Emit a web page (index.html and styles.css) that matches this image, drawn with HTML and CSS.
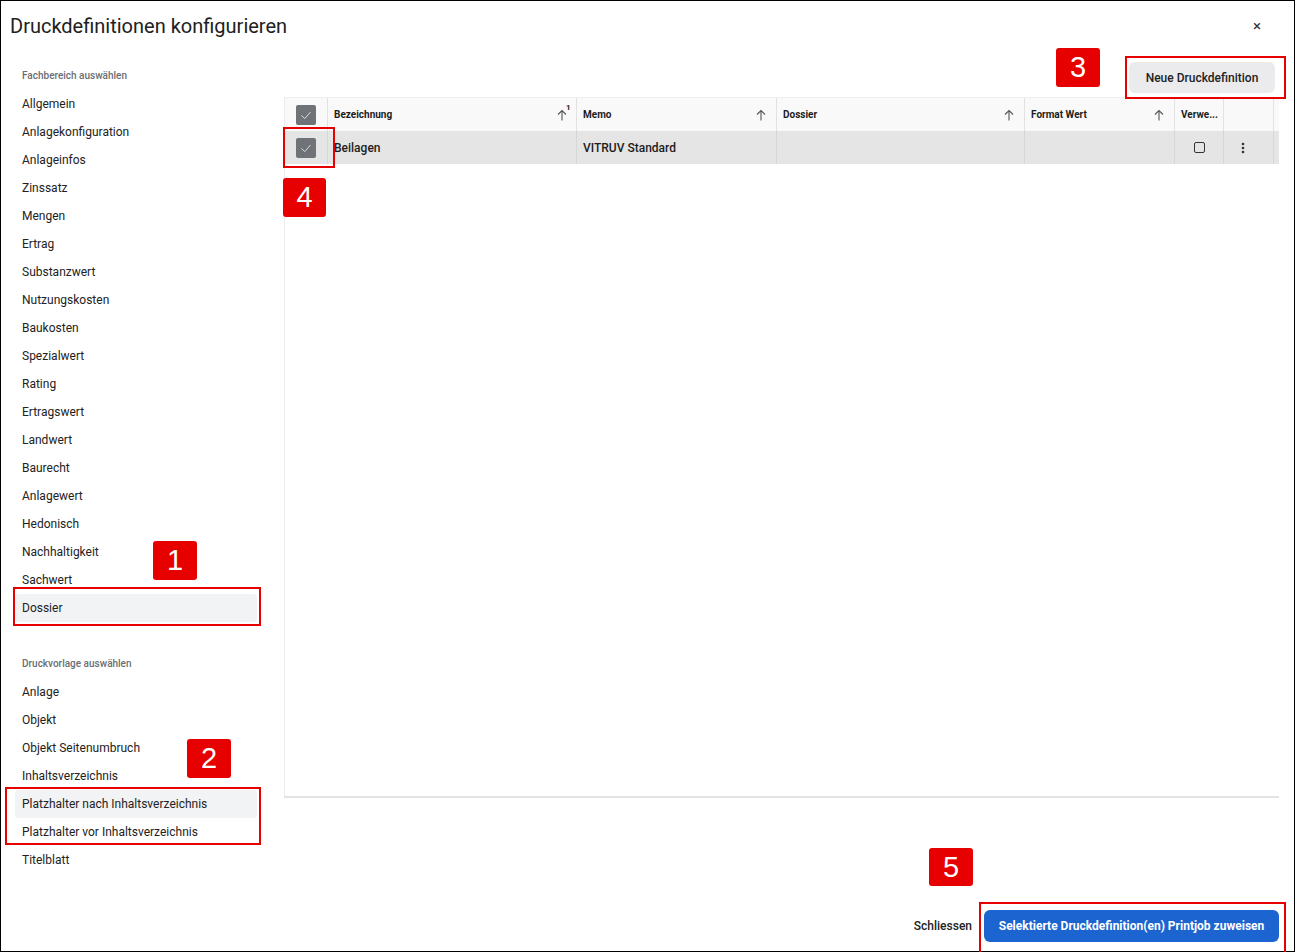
FILE: index.html
```html
<!DOCTYPE html>
<html lang="de">
<head>
  <meta charset="UTF-8" />
  <title>Druckdefinitionen konfigurieren</title>
  <link rel="stylesheet" href="styles.css">
</head>
<body>
  <div class="dialog">
    <div class="dialog-header">
      <h1 class="title">Druckdefinitionen konfigurieren</h1>
      <span class="close">&#215;</span>
    </div>

    <div class="dialog-main">
      <div class="sidebar">
        <div class="section-label">Fachbereich auswählen</div>
        <div class="nav-item">Allgemein</div>
        <div class="nav-item">Anlagekonfiguration</div>
        <div class="nav-item">Anlageinfos</div>
        <div class="nav-item">Zinssatz</div>
        <div class="nav-item">Mengen</div>
        <div class="nav-item">Ertrag</div>
        <div class="nav-item">Substanzwert</div>
        <div class="nav-item">Nutzungskosten</div>
        <div class="nav-item">Baukosten</div>
        <div class="nav-item">Spezialwert</div>
        <div class="nav-item">Rating</div>
        <div class="nav-item">Ertragswert</div>
        <div class="nav-item">Landwert</div>
        <div class="nav-item">Baurecht</div>
        <div class="nav-item">Anlagewert</div>
        <div class="nav-item">Hedonisch</div>
        <div class="nav-item">Nachhaltigkeit</div>
        <div class="nav-item">Sachwert</div>
        <div class="nav-item active">Dossier</div>

        <div class="section-label second">Druckvorlage auswählen</div>
        <div class="nav-item">Anlage</div>
        <div class="nav-item">Objekt</div>
        <div class="nav-item">Objekt Seitenumbruch</div>
        <div class="nav-item">Inhaltsverzeichnis</div>
        <div class="nav-item active">Platzhalter nach Inhaltsverzeichnis</div>
        <div class="nav-item">Platzhalter vor Inhaltsverzeichnis</div>
        <div class="nav-item">Titelblatt</div>
      </div>

      <div class="content">
        <div class="toolbar">
          <button class="btn-secondary">Neue Druckdefinition</button>
        </div>

        <div class="table-panel">
          <div class="row head">
            <div class="cell check">
              <svg width="20" height="20" viewBox="0 0 20 20"><rect width="20" height="20" rx="2" fill="#6f7277"/><polyline points="5.5,10.5 8.8,13.6 14.5,7" fill="none" stroke="#d9dadc" stroke-width="1"/></svg>
            </div>
            <div class="cell">Bezeichnung
              <span class="sort first">
                <svg width="10" height="12" viewBox="0 0 10 12"><path d="M5 11.5V1.5M1 5.5L5 1.5L9 5.5" fill="none" stroke="#555" stroke-width="1.1"/></svg><sup>1</sup>
              </span>
            </div>
            <div class="cell">Memo
              <span class="sort"><svg width="10" height="12" viewBox="0 0 10 12"><path d="M5 11.5V1.5M1 5.5L5 1.5L9 5.5" fill="none" stroke="#555" stroke-width="1.1"/></svg></span>
            </div>
            <div class="cell">Dossier
              <span class="sort"><svg width="10" height="12" viewBox="0 0 10 12"><path d="M5 11.5V1.5M1 5.5L5 1.5L9 5.5" fill="none" stroke="#555" stroke-width="1.1"/></svg></span>
            </div>
            <div class="cell">Format Wert
              <span class="sort"><svg width="10" height="12" viewBox="0 0 10 12"><path d="M5 11.5V1.5M1 5.5L5 1.5L9 5.5" fill="none" stroke="#555" stroke-width="1.1"/></svg></span>
            </div>
            <div class="cell">Verwe...</div>
            <div class="cell"></div>
            <div class="cell last"></div>
          </div>

          <div class="row data">
            <div class="cell check">
              <svg width="20" height="20" viewBox="0 0 20 20"><rect width="20" height="20" rx="2" fill="#6f7277"/><polyline points="5.5,10.5 8.8,13.6 14.5,7" fill="none" stroke="#d9dadc" stroke-width="1"/></svg>
            </div>
            <div class="cell">Beilagen</div>
            <div class="cell">VITRUV Standard</div>
            <div class="cell"></div>
            <div class="cell"></div>
            <div class="cell center"><span class="box"></span></div>
            <div class="cell center menu">
              <svg width="4" height="12" viewBox="0 0 4 12"><circle cx="2" cy="2" r="1.3" fill="#333"/><circle cx="2" cy="6" r="1.3" fill="#333"/><circle cx="2" cy="10" r="1.3" fill="#333"/></svg>
            </div>
            <div class="cell last"></div>
          </div>
        </div>
      </div>
    </div>

    <div class="dialog-footer">
      <button class="btn-text">Schliessen</button>
      <button class="btn-primary">Selektierte Druckdefinition(en) Printjob zuweisen</button>
    </div>
  </div>

  <!-- annotation markers -->
  <div class="badge b1">1</div>
  <div class="frame f1"></div>
  <div class="badge b2">2</div>
  <div class="frame f2"></div>
  <div class="badge b3">3</div>
  <div class="frame f3"></div>
  <div class="badge b4">4</div>
  <div class="frame f4"></div>
  <div class="badge b5">5</div>
  <div class="frame f5"></div>
</body>
</html>
```

FILE: styles.css
```css
body {
  margin: 0;
  position: relative;
  font-family: Roboto, "Liberation Sans", sans-serif;
  color: #222;
  background: #fff;
}

.dialog {
  width: 1295px;
  height: 952px;
  box-sizing: border-box;
  border: 1px solid #000;
  display: flex;
  flex-direction: column;
}

.dialog-header {
  height: 50px;
  display: flex;
  align-items: center;
  justify-content: space-between;
  padding: 0 33px 0 9px;
}

.title {
  margin: 0;
  font-size: 20px;
  font-weight: 400;
  color: #212121;
}

.close {
  font-size: 15px;
  color: #333;
}

.dialog-main {
  flex: 1;
  min-height: 0;
  display: flex;
}

.sidebar {
  width: 242px;
  margin-left: 14px;
  padding-top: 11px;
}

.section-label {
  height: 28px;
  line-height: 28px;
  padding-left: 7px;
  font-size: 10px;
  font-weight: 500;
  color: #6b6e73;
}

.section-label.second {
  margin-top: 28px;
}

.nav-item {
  height: 28px;
  line-height: 28px;
  padding-left: 7px;
  font-size: 12px;
  color: #222;
  border-radius: 3px;
}

.nav-item.active {
  background: #f2f3f5;
}

.content {
  width: 995px;
  margin-left: 27px;
}

.toolbar {
  height: 46px;
  box-sizing: border-box;
  padding: 11px 4px 0 0;
  display: flex;
  justify-content: flex-end;
  align-items: flex-start;
}

.btn-secondary {
  height: 31px;
  width: 146px;
  border: none;
  border-radius: 6px;
  background: #ebebed;
  color: #222;
  font-family: inherit;
  font-size: 12px;
  font-weight: 500;
}

.table-panel {
  height: 701px;
  box-sizing: border-box;
  border-left: 1px solid #ececec;
  border-bottom: 2px solid #e3e3e3;
}

.row {
  display: grid;
  grid-template-columns: 43px 249px 200px 248px 150px 49px 50px 1fr;
}

.row.head {
  height: 34px;
  background: #f9f9f9;
  border-top: 1px solid #efefef;
  box-sizing: border-box;
  font-size: 10px;
  font-weight: 700;
  color: #1d1d1d;
}

.row.data {
  height: 33px;
  background: #e5e5e5;
  font-size: 12px;
  font-weight: 500;
  color: #1d1d1d;
}

.cell {
  position: relative;
  display: flex;
  align-items: center;
  padding-left: 6px;
  border-right: 1px solid #e2e2e2;
  white-space: nowrap;
}

.row.data .cell {
  border-right-color: #d7d7d7;
}

.cell.check {
  padding-left: 11px;
}

.cell.center {
  justify-content: center;
  padding-left: 0;
}

.cell.menu {
  padding-right: 11px;
}

.cell.last {
  border-right: none;
}

.sort {
  position: absolute;
  right: 10px;
  top: 11px;
}

.sort.first {
  right: 9px;
}

.sort sup {
  position: absolute;
  left: 9px;
  top: -5px;
  font-size: 8px;
  font-weight: 700;
  line-height: 1;
}

.box {
  width: 9px;
  height: 9px;
  border: 1.5px solid #333;
  border-radius: 2px;
}

.dialog-footer {
  display: flex;
  justify-content: flex-end;
  align-items: center;
  gap: 12px;
  padding: 0 15px 9px 0;
}

.btn-text {
  border: none;
  background: none;
  padding: 0;
  font-family: inherit;
  font-size: 12px;
  font-weight: 500;
  color: #222;
}

.btn-primary {
  height: 32px;
  width: 295px;
  border: none;
  border-radius: 6px;
  background: #1c64d0;
  color: #fff;
  font-family: inherit;
  font-size: 12px;
  font-weight: 700;
}

.badge {
  position: absolute;
  width: 44px;
  height: 39px;
  border-radius: 3px;
  background: #e60000;
  color: #fff;
  font-family: "Liberation Sans", Arial, sans-serif;
  font-size: 29px;
  line-height: 39px;
  text-align: center;
}

.frame {
  position: absolute;
  box-sizing: border-box;
  border: 2px solid #e60000;
}

.b1 { left: 153px; top: 541px; }
.f1 { left: 13px; top: 587px; width: 248px; height: 39px; }
.b2 { left: 187px; top: 739px; }
.f2 { left: 5px; top: 787px; width: 256px; height: 58px; }
.b3 { left: 1056px; top: 48px; }
.f3 { left: 1125px; top: 56px; width: 161px; height: 43px; }
.b4 { left: 283px; top: 178px; width: 43px; }
.f4 { left: 283px; top: 127px; width: 52px; height: 41px; }
.b5 { left: 929px; top: 848px; height: 38px; line-height: 38px; }
.f5 { left: 979px; top: 902px; width: 307px; height: 52px; }
```
